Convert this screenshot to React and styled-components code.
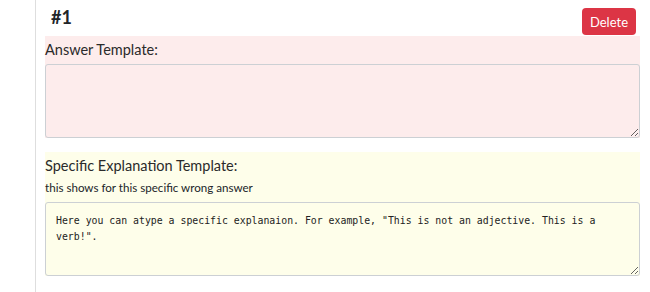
import React from 'react';
import styled, { createGlobalStyle } from 'styled-components';

const GlobalStyle = createGlobalStyle`
  body {
    margin: 0;
    background: #fff;
    font-family: Lato, "Noto Sans", sans-serif;
    color: #212529;
  }
`;

const Page = styled.div`
  padding-left: 35px;
  width: 605px;
`;

const Column = styled.div`
  border-left: 1px solid #dedede;
  padding-left: 9px;
  min-height: 292px;
  box-sizing: border-box;
`;

const Header = styled.div`
  display: flex;
  align-items: flex-start;
  justify-content: space-between;
  height: 36px;
`;

const Title = styled.h3`
  margin: 0;
  padding: 7px 0 0 6px;
  font-size: 18px;
  font-weight: 700;
  line-height: 21px;
`;

const DeleteButton = styled.button`
  margin: 8px 4px 0 0;
  height: 27px;
  padding: 0 8px;
  border: none;
  border-radius: 4px;
  background: #dc3545;
  color: #fff;
  font-family: inherit;
  font-size: 13px;
`;

const Section = styled.div`
  background: ${(p) => p.$bg};
  margin-bottom: 14px;
`;

const Label = styled.div`
  font-size: 14.5px;
  line-height: 20px;
  padding: 4px 0 4px;
  color: #2a2a2a;
`;

const Hint = styled.div`
  font-size: 11.6px;
  line-height: 16px;
  padding-bottom: 6px;
`;

const Field = styled.textarea`
  display: block;
  width: 100%;
  height: 74px;
  box-sizing: border-box;
  margin: 0;
  padding: 10px 10px 6px;
  border: 1px solid #ccd0d4;
  border-radius: 3px;
  background: ${(p) => p.$bg};
  font-family: "DejaVu Sans Mono", "Liberation Mono", monospace;
  font-size: 9.85px;
  line-height: 16px;
  color: #222;
  resize: vertical;
`;

export default function App() {
  return (
    <>
      <GlobalStyle />
      <Page>
        <Column>
          <Header>
            <Title>#1</Title>
            <DeleteButton>Delete</DeleteButton>
          </Header>
          <Section $bg="#fdecec">
            <Label>Answer Template:</Label>
            <Field $bg="#fdecec" defaultValue="" />
          </Section>
          <Section $bg="#fefeea">
            <Label>Specific Explanation Template:</Label>
            <Hint>this shows for this specific wrong answer</Hint>
            <Field
              $bg="#fefeea"
              defaultValue={'Here you can atype a specific explanaion. For example, "This is not an adjective. This is a verb!".'}
            />
          </Section>
        </Column>
      </Page>
    </>
  );
}
